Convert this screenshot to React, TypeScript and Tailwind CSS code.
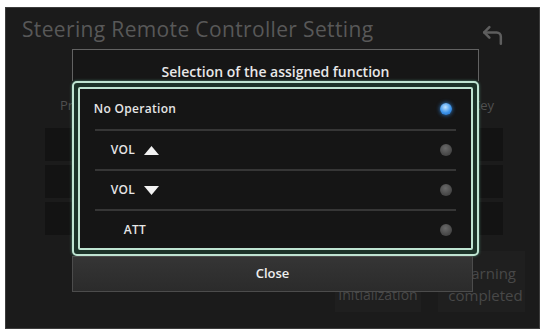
import { CornerUpLeft } from "lucide-react";

type Option = {
  id: string;
  label: string;
  arrow?: "up" | "down";
  selected?: boolean;
  rowClass: string;
};

const options: Option[] = [
  { id: "none", label: "No Operation", selected: true, rowClass: "h-[42px] border-b-2" },
  { id: "volup", label: "VOL", arrow: "up", rowClass: "h-[40px] border-b-2" },
  { id: "voldown", label: "VOL", arrow: "down", rowClass: "h-[40px] border-b-2" },
  { id: "att", label: "ATT", rowClass: "h-[37px] border-b-0" },
];

function Arrow({ dir }: { dir: "up" | "down" }) {
  return (
    <svg width="15" height="9" viewBox="0 0 15 9" className="ml-[9px]">
      {dir === "up" ? (
        <polygon points="7.5,0 15,9 0,9" fill="#f2f2f2" />
      ) : (
        <polygon points="0,0 15,0 7.5,9" fill="#f2f2f2" />
      )}
    </svg>
  );
}

function Radio({ on }: { on?: boolean }) {
  return on ? (
    <span className="block w-[12px] h-[12px] rounded-full bg-[radial-gradient(circle_at_45%_35%,#bfe3ff,#3b93ea_55%,#1f64b8)] shadow-[0_0_4px_#2f7fd0]" />
  ) : (
    <span className="block w-[12px] h-[12px] rounded-full bg-[radial-gradient(circle_at_45%_35%,#6a6a6a,#4a4a4a_60%,#3a3a3a)]" />
  );
}

export default function App() {
  return (
    <div className="w-[546px] h-[331px] bg-white pl-[5px] pt-[7px] font-['Open_Sans','Noto_Sans',sans-serif]">
      <div className="relative w-[535px] h-[322px] bg-[#1b1b1b] border border-[#3c3c3c] overflow-hidden">
        {/* screen behind the dialog */}
        <div className="flex items-start justify-between h-[44px] pl-[16px] pr-[34px]">
          <span className="mt-[7px] text-[21px] leading-[28px] font-medium text-[#585858] tracking-[0.35px]">
            Steering Remote Controller Setting
          </span>
          <CornerUpLeft className="mt-[15px]" size={25} color="#5e5e5e" strokeWidth={2.4} />
        </div>

        <div className="flex justify-between mt-[44px] pl-[39px] pr-[36px]">
          <div className="w-[190px]">
            <div className="h-[18px] pl-[15px] text-[13px] leading-[18px] text-[#4f4f4f]">Preset</div>
            <div className="flex flex-col gap-[4px] mt-[14px]">
              <div className="h-[33px] bg-[#131313]" />
              <div className="h-[33px] bg-[#131313]" />
              <div className="h-[33px] bg-[#131313]" />
            </div>
          </div>
          <div className="w-[190px]">
            <div className="h-[18px] pr-[9px] text-right text-[13px] leading-[18px] text-[#4f4f4f]">Key</div>
            <div className="flex flex-col gap-[4px] mt-[14px]">
              <div className="h-[33px] bg-[#131313]" />
              <div className="h-[33px] bg-[#131313]" />
              <div className="h-[33px] bg-[#131313]" />
            </div>
          </div>
        </div>

        <div className="flex justify-end gap-[17px] mt-[16px] pr-[14px]">
          <div className="w-[86px] h-[61px] bg-[#1f1f1f] flex flex-col justify-end items-center pb-[7px] text-[14px] leading-[20px] text-[#484848]">
            Initialization
          </div>
          <div className="w-[87px] h-[61px] bg-[#1f1f1f] flex flex-col justify-center items-center pt-[4px] pl-[8px] text-[15px] leading-[22px] text-[#484848] whitespace-nowrap">
            <span>Learning</span>
            <span>completed</span>
          </div>
        </div>

        {/* dialog */}
        <div className="absolute left-[66px] top-[41px] w-[407px]">
          <div className="h-[32px] border-x border-t border-[#626262] bg-[#161616] pt-[13px] text-center text-[14px] leading-[18px] font-semibold text-[#e8e8e8]">
            Selection of the assigned function
          </div>
          <div className="h-[175px] rounded-[5px] border-2 border-[#bfe4d2] bg-[#1c3329] p-[4px] shadow-[0_0_3px_#4f8a74]">
            <div className="h-full rounded-[2px] border-2 border-[#bfe4d2] bg-[#151515]">
              {options.map((o) => (
                <div key={o.id} className={o.rowClass + " border-[#363636] mx-[15px] flex items-center"}>
                  <div className="-ml-[15px] w-[110px] flex items-center justify-center whitespace-nowrap text-[12px] font-semibold text-[#e6e6e6] tracking-[0.3px]">
                    {o.label}
                    {o.arrow && <Arrow dir={o.arrow} />}
                  </div>
                  <div className="flex-1" />
                  <div className="mr-[4px]">
                    <Radio on={o.selected} />
                  </div>
                </div>
              ))}
            </div>
          </div>
          <div className="w-[401px] h-[36px] border border-[#4c4c4c] bg-[linear-gradient(#353535,#2b2b2b)] flex items-center justify-center text-[13px] font-semibold text-[#efefef]">
            Close
          </div>
        </div>
      </div>
    </div>
  );
}
